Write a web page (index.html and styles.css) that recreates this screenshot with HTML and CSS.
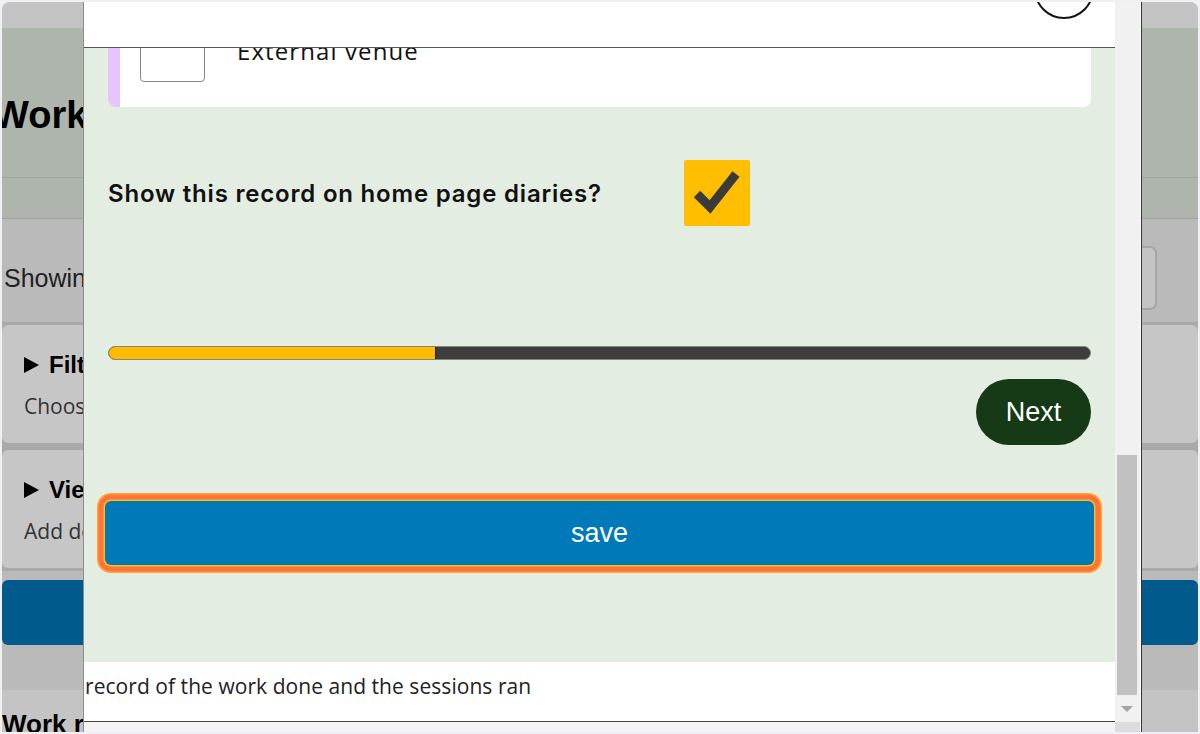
FILE: index.html
```html
<!DOCTYPE html>
<html lang="en">
<head>
<meta charset="utf-8">
<title>Work records</title>
<link rel="stylesheet" href="styles.css">
</head>
<body>
<div class="screen">
  <div class="page">
    <div class="topbar"></div>
    <header class="hero"><h1 class="hero-title">Work records</h1></header>
    <nav class="subnav"></nav>
    <div class="toolbar">
      <span class="showing">Showing all work records</span>
      <button class="search-btn">Search</button>
    </div>
    <div class="panels">
      <div class="panel">
        <div class="panel-summary"><span class="caret"></span>Filters</div>
        <p class="panel-text">Choose which records to show</p>
      </div>
      <div class="panel">
        <div class="panel-summary"><span class="caret"></span>View options</div>
        <p class="panel-text">Add details to the list</p>
      </div>
    </div>
    <div class="actions"><button class="add-btn">Add a work record</button></div>
    <h2 class="list-title">Work records</h2>
  </div>

  <div class="modal">
    <div class="modal-main">
      <div class="modal-head"><button class="close-btn">×</button></div>
      <div class="modal-body">
        <div class="modal-scroll">
          <div class="option-card">
            <label class="option-row"><span class="option-box"></span><span class="option-label">External venue</span></label>
          </div>
          <div class="diary-row">
            <span class="diary-label">Show this record on home page diaries?</span>
            <span class="tick">
              <svg viewBox="0 0 66 66" width="66" height="66"><path d="M13 34 L26 47 L52 14" fill="none" stroke="#3a3a3a" stroke-width="9"/></svg>
            </span>
          </div>
          <div class="progress"><div class="progress-fill" style="width:33.3%"></div></div>
          <div class="next-row"><button class="next-btn">Next</button></div>
          <button class="save-btn">save</button>
        </div>
      </div>
      <div class="modal-foot">record of the work done and the sessions ran</div>
      <div class="modal-tail"></div>
    </div>
    <div class="scrollbar">
      <div class="sb-track"><div class="sb-thumb"></div></div>
      <div class="sb-arrow"><span class="sb-tri"></span></div>
      <div class="sb-corner"></div>
    </div>
  </div>
</div>
</body>
</html>
```

FILE: styles.css
```css
* { box-sizing: border-box; }
html, body { margin: 0; padding: 0; }
body {
  width: 1200px;
  height: 734px;
  overflow: hidden;
  background: #f0f0f4;
  font-family: "Liberation Sans", Arial, sans-serif;
}
button { font-family: inherit; }

.screen {
  position: relative;
  margin: 2px;
  width: 1196px;
  height: 730px;
  border-radius: 8px 8px 0 0;
  overflow: hidden;
  background: #c4c4c4;
}

/* background page (dimmed) */
.page { display: flex; flex-direction: column; height: 100%; }
.topbar { flex: none; height: 26px; background: #c4c4c4; }
.hero {
  flex: none;
  height: 150px;
  background: #aeb5ac;
  border-bottom: 1px solid #a2a7a1;
  padding-top: 65px;
}
.hero-title {
  margin: 0;
  font-size: 38px;
  line-height: 44px;
  font-weight: 700;
  color: #000;
  text-indent: -9px;
  white-space: nowrap;
}
.subnav { flex: none; height: 41px; background: #aeb5ac; border-bottom: 1px solid #9ea39d; }
.toolbar {
  flex: none;
  height: 103px;
  background: #bababa;
  display: flex;
  align-items: center;
  justify-content: space-between;
  padding: 27px 41px 12px 2px;
}
.showing { font-size: 25px; color: #222; }
.search-btn {
  height: 64px;
  padding: 0 14px;
  border: 2px solid #a6a6a6;
  border-radius: 7px;
  background: #c4c4c4;
  font-size: 24px;
  color: #000;
}
.panels {
  flex: none;
  display: flex;
  flex-direction: column;
  gap: 7px;
  padding: 3px 0;
  background: #a9a9a9;
}
.panel {
  height: 118px;
  background: #c6c6c6;
  border-radius: 6px;
  padding: 24px 22px 0 22px;
}
.panel-summary {
  display: flex;
  align-items: center;
  gap: 10px;
  height: 32px;
  font-size: 24px;
  font-weight: 700;
  color: #000;
}
.caret {
  width: 0; height: 0;
  border-left: 15px solid #000;
  border-top: 8px solid transparent;
  border-bottom: 8px solid transparent;
}
.panel-text {
  margin: 12px 0 0;
  height: 26px;
  line-height: 26px;
  font-family: "Open Sans", sans-serif;
  font-size: 21px;
  color: #333;
}
.actions { flex: none; background: #bababa; padding: 9px 0 45px; }
.add-btn {
  display: block;
  width: 100%;
  height: 65px;
  border: none;
  border-radius: 6px;
  background: #005a8c;
  color: #c4c4c4;
  font-size: 24px;
}
.list-title {
  flex: 1;
  margin: 0;
  background: #c4c4c4;
  padding-top: 18px;
  font-size: 26px;
  line-height: 32px;
  font-weight: 700;
  color: #000;
  white-space: nowrap;
}

/* modal */
.modal {
  position: absolute;
  left: 81px;
  top: 0;
  bottom: 0;
  width: 1059px;
  display: flex;
  border-left: 1px solid #8c8c8c;
  border-right: 1px solid #333;
  background: #fff;
}
.modal-main { width: 1031px; display: flex; flex-direction: column; }
.modal-head {
  flex: none;
  height: 46px;
  background: #fff;
  border-bottom: 1px solid #555;
  display: flex;
  justify-content: flex-end;
  align-items: flex-start;
  overflow: hidden;
  padding-right: 21px;
}
.close-btn {
  flex: none;
  width: 60px;
  height: 60px;
  margin-top: -43px;
  border: 2.5px solid #111;
  border-radius: 50%;
  background: #fff;
  font-size: 30px;
  color: #111;
}
.modal-body {
  flex: none;
  height: 614px;
  background: #e3ede2;
  overflow: hidden;
  padding: 0 24px;
}
.modal-scroll { margin-top: -56px; display: flex; flex-direction: column; }
.option-card {
  background: #fff;
  border-left: 12px solid #e6c4fc;
  border-radius: 8px;
  padding: 25px 20px;
}
.option-row { display: flex; align-items: center; gap: 32px; }
.option-box {
  width: 65px;
  height: 65px;
  border: 1.5px solid #858585;
  border-radius: 4px;
  background: #fff;
}
.option-label {
  font-family: "Open Sans", sans-serif;
  font-size: 24px;
  letter-spacing: 1.1px;
  color: #111;
  margin-top: 2px;
}
.diary-row {
  margin-top: 53px;
  display: flex;
  align-items: center;
  gap: 82px;
}
.diary-label {
  font-family: Inter, sans-serif;
  font-weight: 600;
  font-size: 24px;
  letter-spacing: 0.8px;
  color: #111;
  white-space: nowrap;
}
.tick {
  flex: none;
  width: 66px;
  height: 66px;
  background: #ffbf00;
  border-radius: 2px;
  display: block;
}
.tick svg { display: block; }
.progress {
  margin-top: 120px;
  height: 14px;
  border: 1px solid #85857d;
  border-radius: 7px;
  background: #3d3d3d;
  overflow: hidden;
}
.progress-fill { height: 100%; background: #ffbb00; border-right: 1px solid #222; }
.next-row { margin-top: 19px; display: flex; justify-content: flex-end; }
.next-btn {
  height: 66px;
  width: 115px;
  border: none;
  border-radius: 33px;
  background: #163a15;
  color: #fff;
  font-size: 27px;
}
.save-btn {
  margin: 56px -3px 0;
  height: 64px;
  border: none;
  border-radius: 6px;
  background: #0079b8;
  color: #fff;
  font-size: 27px;
  box-shadow: 0 0 0 1.5px #ffc107, 0 0 0 6.5px #ff7340, 0 0 0 8px #ffa62b;
}
.modal-foot {
  flex: none;
  height: 60px;
  background: #fff;
  border-bottom: 1px solid #444;
  padding: 10px 0 0 1px;
  line-height: 28px;
  font-family: "Open Sans", sans-serif;
  font-size: 21px;
  letter-spacing: 0.05px;
  color: #222;
  white-space: nowrap;
}
.modal-tail { flex: 1; background: #f4f4f4; }

/* scrollbar */
.scrollbar {
  width: 25px;
  display: flex;
  flex-direction: column;
  background: #f1f1f1;
}
.sb-track { flex: 1; padding: 453px 3px 0 2px; }
.sb-thumb { height: 240px; background: #c1c1c1; }
.sb-arrow { flex: none; height: 27px; display: flex; justify-content: center; align-items: center; padding-right: 2px; }
.sb-tri {
  width: 0; height: 0;
  border-top: 6px solid #a3a3a3;
  border-left: 6px solid transparent;
  border-right: 6px solid transparent;
}
.sb-corner { flex: none; height: 10px; background: #dcdcdc; }
```
